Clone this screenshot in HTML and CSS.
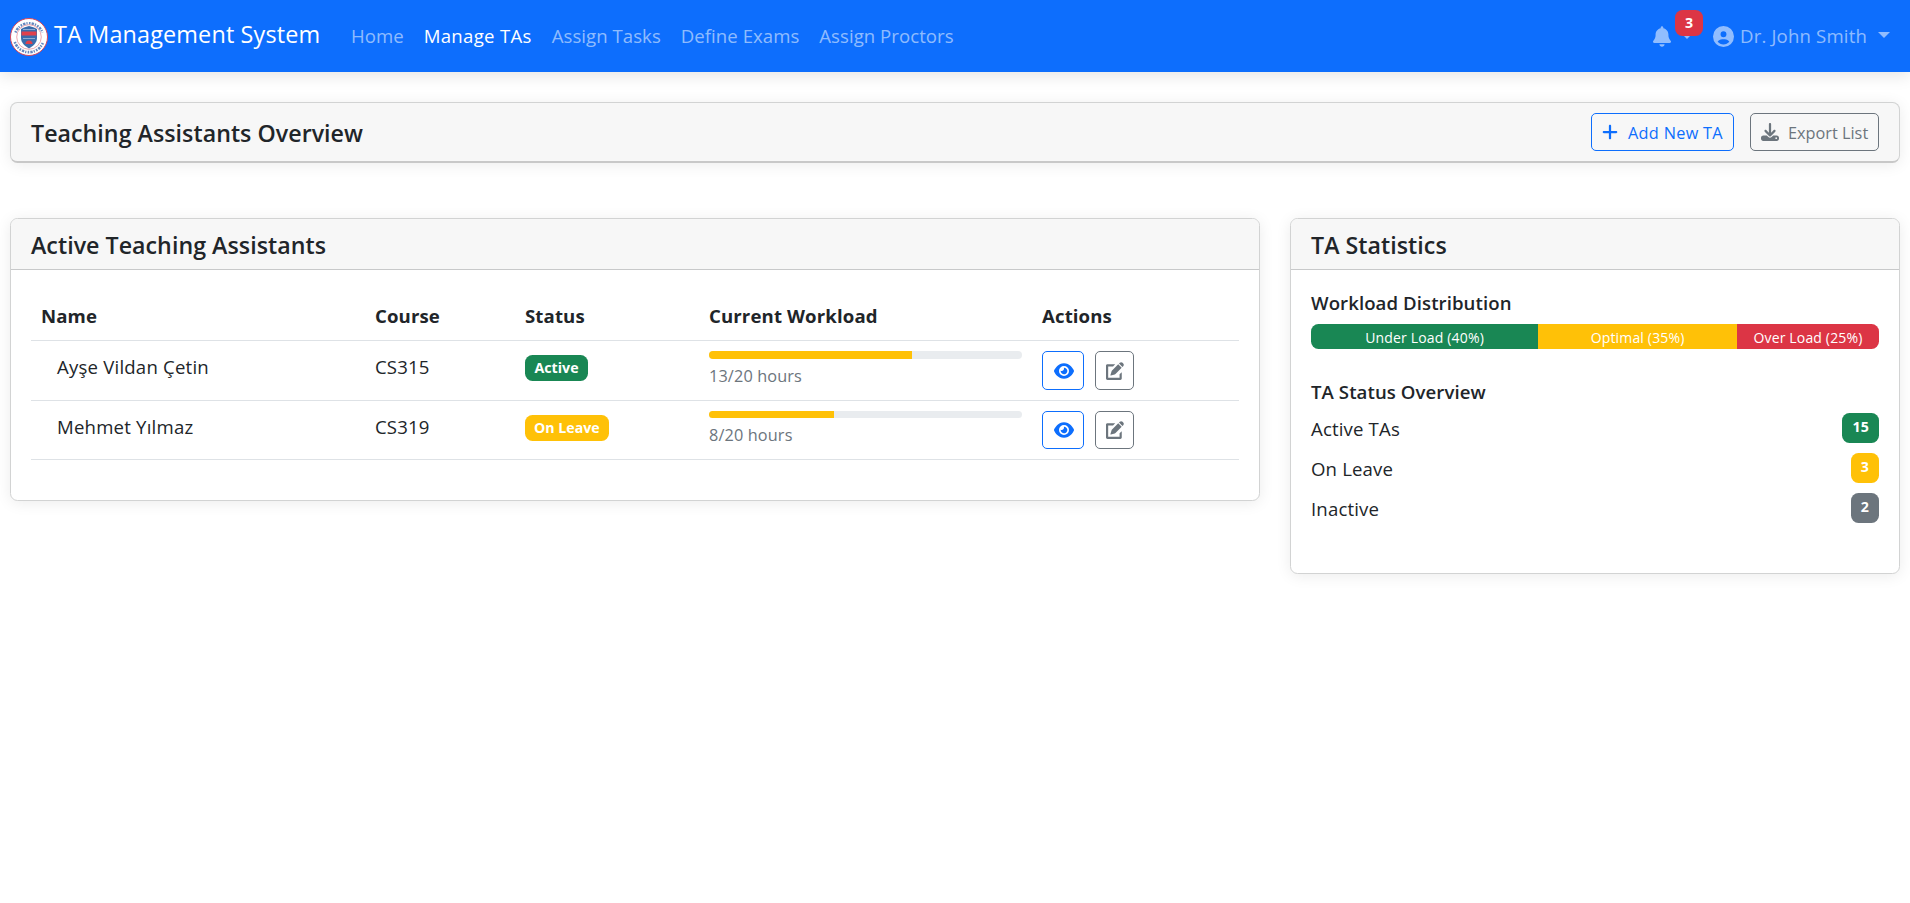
FILE: index.html
```html
<!DOCTYPE html>
<html lang="en">
<head>
<meta charset="utf-8">
<title>TA Management System</title>
<link rel="stylesheet" href="styles.css">
</head>
<body>
<svg class="sprite" aria-hidden="true">
  <symbol id="bell" viewBox="0 0 448 512"><path d="M224 0c-17.7 0-32 14.3-32 32V51.2C119 66 64 130.6 64 208v18.8c0 47-17.3 92.4-48.5 127.6l-7.4 8.3c-8.4 9.4-10.4 22.9-5.3 34.4S19.4 416 32 416H416c12.6 0 24-7.4 29.2-18.9s3.1-25-5.3-34.4l-7.4-8.3C401.3 319.2 384 273.9 384 226.8V208c0-77.4-55-142-128-156.8V32c0-17.7-14.3-32-32-32zm45.3 493.3c12-12 18.7-28.3 18.7-45.3H224 160c0 17 6.7 33.3 18.7 45.3s28.3 18.7 45.3 18.7s33.3-6.7 45.3-18.7z"/></symbol>
  <symbol id="user" viewBox="0 0 512 512"><path d="M399 384.2C376.9 345.8 335.4 320 288 320H224c-47.4 0-88.9 25.8-111 64.2c35.2 39.2 86.2 63.8 143 63.8s107.8-24.7 143-63.8zM0 256a256 256 0 1 1 512 0A256 256 0 1 1 0 256zm256 16a72 72 0 1 0 0-144 72 72 0 1 0 0 144z"/></symbol>
  <symbol id="plus" viewBox="0 0 448 512"><path d="M256 80c0-17.7-14.3-32-32-32s-32 14.3-32 32V224H48c-17.7 0-32 14.3-32 32s14.3 32 32 32H192V432c0 17.7 14.3 32 32 32s32-14.3 32-32V288H400c17.7 0 32-14.3 32-32s-14.3-32-32-32H256V80z"/></symbol>
  <symbol id="download" viewBox="0 0 512 512"><path d="M288 32c0-17.7-14.3-32-32-32s-32 14.3-32 32V274.7l-73.4-73.4c-12.5-12.5-32.8-12.5-45.3 0s-12.5 32.8 0 45.3l128 128c12.5 12.5 32.8 12.5 45.3 0l128-128c12.5-12.5 12.5-32.8 0-45.3s-32.8-12.5-45.3 0L288 274.7V32zM64 352c-35.3 0-64 28.7-64 64v32c0 35.3 28.7 64 64 64H448c35.3 0 64-28.7 64-64V416c0-35.3-28.7-64-64-64H346.5l-45.3 45.3c-25 25-65.5 25-90.5 0L165.5 352H64zm368 56a24 24 0 1 1 0 48 24 24 0 1 1 0-48z"/></symbol>
  <symbol id="eye" viewBox="0 0 576 512"><path d="M288 32c-80.8 0-145.5 36.8-192.6 80.6C48.6 156 17.3 208 2.5 243.7c-3.3 7.9-3.3 16.7 0 24.6C17.3 304 48.6 356 95.4 399.4C142.5 443.2 207.2 480 288 480s145.5-36.8 192.6-80.6c46.8-43.5 78.1-95.4 93-131.1c3.3-7.9 3.3-16.7 0-24.6c-14.9-35.7-46.2-87.7-93-131.1C433.5 68.8 368.8 32 288 32zM144 256a144 144 0 1 1 288 0 144 144 0 1 1 -288 0zm144-64c0 35.3-28.7 64-64 64c-7.1 0-13.9-1.2-20.3-3.3c-5.5-1.8-11.9 1.6-11.7 7.4c.3 6.9 1.3 13.8 3.2 20.7c13.7 51.2 66.4 81.6 117.6 67.9s81.6-66.4 67.9-117.6c-11.1-41.5-47.8-69.4-88.6-71.1c-5.8-.2-9.2 6.1-7.4 11.7c2.1 6.4 3.3 13.2 3.3 20.3z"/></symbol>
  <symbol id="edit" viewBox="0 0 512 512"><path d="M471.600 21.700c-21.900-21.900-57.300-21.900-79.200 0L370 44l98 98 22.300-22.500c21.900-21.900 21.900-57.300 0-79.200zM172.400 241.700c-6.100 6.100-10.800 13.600-13.500 21.900L126 372c-2 8 6 16 14 14l108.400-33c8.200-2.700 15.700-7.400 21.900-13.500L446 164l-98-98zM40 64C18 64 0 82 0 104V472c0 22 18 40 40 40H408c22 0 40-18 40-40V288l-62 62V450H62V126H200l62-62z"/></symbol>
</svg>
<nav class="navbar">
  <svg class="logo" viewBox="0 0 38 38">
    <circle cx="19" cy="19" r="18.5" fill="#fff" stroke="#d9485a" stroke-width="1"/>
    <path d="M5.500 14.500A14.500 14.500 0 0 1 32.500 14.500" fill="none" stroke="#2f5fa8" stroke-width="2.600" stroke-dasharray="1.600 1.100 2.400 1 1.200 1.300" opacity=".75"/>
    <path d="M4.800 24A15 15 0 0 0 33.200 24" fill="none" stroke="#2f5fa8" stroke-width="2.600" stroke-dasharray="1.600 1.100 2.400 1 1.200 1.300" opacity=".75"/>
    <circle cx="19" cy="19" r="12.3" fill="#fff" stroke="#e8909a" stroke-width=".8"/>
    <path d="M11 11l3-1.500L19 8l5 1.500L27 11v9c0 5-4 8-8 10.500C15 28 11 25 11 20z" fill="#3b6cab"/>
    <rect x="11.500" y="13.500" width="15" height="4" fill="#e0404c"/>
    <path d="M13 20.500h12M13 11.500h12" stroke="#8fabd2" stroke-width="1"/>
    <path d="M15.500 26a3.500 3.500 0 0 1 7 0z" fill="#e0404c"/>
  </svg>
  <a class="brand">TA Management System</a>
  <div class="links">
    <a class="link">Home</a><a class="link active">Manage TAs</a><a class="link">Assign Tasks</a><a class="link">Define Exams</a><a class="link">Assign Proctors</a>
  </div>
  <div class="bell"><svg class="bell-icon"><use href="#bell"/></svg><i class="caret"></i><span class="badge count">3</span></div>
  <div class="user"><svg class="user-icon"><use href="#user"/></svg><span class="user-name">Dr. John Smith</span><i class="caret"></i></div>
</nav>
<main class="page">
  <section class="card overview">
    <h5 class="title">Teaching Assistants Overview</h5>
    <div class="tools">
      <button class="btn primary add"><svg class="plus-icon"><use href="#plus"/></svg><span>Add New TA</span></button>
      <button class="btn secondary export"><svg class="dl-icon"><use href="#download"/></svg><span>Export List</span></button>
    </div>
  </section>
  <div class="columns">
    <section class="card list">
      <div class="card-header"><h5 class="title">Active Teaching Assistants</h5></div>
      <table class="table">
        <colgroup><col class="c1"><col class="c2"><col class="c3"><col class="c4"><col class="c5"></colgroup>
        <thead><tr><th>Name</th><th>Course</th><th>Status</th><th>Current Workload</th><th>Actions</th></tr></thead>
        <tbody>
          <tr class="row-a"><td class="name">Ayşe Vildan Çetin</td><td class="course">CS315</td><td class="status"><span class="badge green">Active</span></td>
            <td class="load"><div class="meter"><div class="fill" style="width:65%"></div></div><small>13/20 hours</small></td>
            <td class="actions"><div class="pair"><button class="btn primary view"><svg class="eye-icon"><use href="#eye"/></svg></button><button class="btn secondary edit"><svg class="edit-icon"><use href="#edit"/></svg></button></div></td></tr>
          <tr class="row-b"><td class="name">Mehmet Yılmaz</td><td class="course">CS319</td><td class="status"><span class="badge yellow">On Leave</span></td>
            <td class="load"><div class="meter"><div class="fill" style="width:40%"></div></div><small>8/20 hours</small></td>
            <td class="actions"><div class="pair"><button class="btn primary view"><svg class="eye-icon"><use href="#eye"/></svg></button><button class="btn secondary edit"><svg class="edit-icon"><use href="#edit"/></svg></button></div></td></tr>
        </tbody>
      </table>
    </section>
    <section class="card stats">
      <div class="card-header"><h5 class="title">TA Statistics</h5></div>
      <div class="stats-body">
        <h6 class="sub">Workload Distribution</h6>
        <div class="dist"><div class="seg green" style="width:40%">Under Load (40%)</div><div class="seg yellow" style="width:35%">Optimal (35%)</div><div class="seg red" style="width:25%">Over Load (25%)</div></div>
        <h6 class="sub">TA Status Overview</h6>
        <div class="stat"><span>Active TAs</span><b class="badge tall green">15</b></div>
        <div class="stat"><span>On Leave</span><b class="badge tall yellow">3</b></div>
        <div class="stat"><span>Inactive</span><b class="badge tall gray">2</b></div>
      </div>
    </section>
  </div>
</main>
</body>
</html>
```
FILE: styles.css
```css
* { box-sizing: border-box; }
body { margin: 0; background: #fff; color: #212529; font-family: "Open Sans", "Noto Sans", sans-serif; font-size: 18.6px; line-height: 30px; }
h5, h6 { margin: 0; }
svg { display: block; flex: none; fill: currentColor; }
.sprite { position: absolute; width: 0; height: 0; }

/* Navigation bar */
.navbar { display: flex; align-items: center; height: 72px; padding: 0 20px 0 10px; background: #0d6efd; color: rgba(255,255,255,.55); box-shadow: 0 4px 15px rgba(0,0,0,.1); }
.logo { width: 38px; height: 38px; margin-top: 2px; }
.brand { margin: 0 22px 4px 6px; width: 265px; font-size: 23.4px; letter-spacing: .15px; color: #fff; white-space: nowrap; }
.links { display: flex; }
.link { padding: 0 10px; letter-spacing: .04px; white-space: nowrap; }
.link.active { color: #fff; letter-spacing: .3px; }
.bell { position: relative; display: flex; align-items: center; margin-left: auto; width: 60px; gap: 10px; }
.bell-icon { width: 18px; height: 21px; }
.caret { width: 0; height: 0; border: 6px solid transparent; border-top-color: currentColor; border-bottom: 0; }
.user .caret { margin-bottom: 2px; }
.badge { display: inline-block; height: 26px; padding: 0 9.5px; border-radius: 7.5px; font-size: 14.2px; font-weight: 700; line-height: 26px; color: #fff; white-space: nowrap; }
.count { position: absolute; left: 22px; top: -16px; width: 28px; padding: 0; text-align: center; background: #dc3545; }
.user { display: flex; align-items: center; }
.user-icon { width: 21px; height: 21px; margin-right: 6px; }
.user-name { width: 128px; margin-right: 10px; letter-spacing: .16px; white-space: nowrap; }

/* Cards */
.page { padding: 30px 10px; }
.card { border: 1px solid #d2d3d3; border-radius: 7.5px; background: #fff; box-shadow: 0 2px 15px rgba(0,0,0,.08); }
.overview { display: flex; justify-content: space-between; align-items: center; height: 61px; padding: 0 20px; background: #f7f7f7; border-bottom: 2px solid #c8c8c8; }
.title { padding-top: 1px; font-size: 23.2px; font-weight: 600; letter-spacing: .04px; white-space: nowrap; }
.card-header { height: 51px; padding: 10px 20px; background: #f7f7f7; border-bottom: 1px solid #c8c9ca; border-radius: 7px 7px 0 0; }
.columns { display: flex; align-items: flex-start; gap: 30px; margin-top: 55px; }
.list { width: 1250px; height: 283px; }
.stats { width: 610px; height: 356px; }

/* Buttons */
.tools { display: flex; gap: 16px; }
.btn { display: flex; align-items: center; height: 38px; border: 1px solid; border-radius: 5px; background: transparent; font: 16.3px "Open Sans", sans-serif; white-space: nowrap; }
.btn span { padding-top: 1px; }
.primary { color: #0d6efd; }
.secondary { color: #6c757d; }
.add { width: 143px; padding: 0 10px; letter-spacing: .3px; }
.plus-icon { width: 16px; height: 18px; margin-right: 10px; }
.export { width: 129px; padding: 0 10px; }
.dl-icon { width: 18px; height: 18px; margin-right: 9px; }
.pair { display: flex; gap: 11px; }
.view { width: 42px; height: 39px; padding: 0 9px 0 11px; }
.edit { width: 39px; height: 39px; padding: 0 10px; }
.eye-icon { width: 20px; height: 18px; }
.edit-icon { width: 18px; height: 18px; }

/* Assistants table */
.table { width: 1208px; margin: 21px 0 0 20px; border-collapse: separate; border-spacing: 0; table-layout: fixed; }
.c1 { width: 334px; }
.c2 { width: 150px; }
.c3 { width: 184px; }
.c4 { width: 333px; }
th, td { padding: 10px; text-align: left; vertical-align: top; border-bottom: 1px solid #dee2e6; white-space: nowrap; letter-spacing: .12px; }
thead th { height: 50px; font-weight: 700; line-height: 29px; }
.row-a td { height: 60px; }
.row-b td { height: 59px; }
td.name { padding: 11px 0 0 26px; letter-spacing: .2px; }
td.course { padding-top: 11px; }
td.status { letter-spacing: 0; }
.row-b .badge { padding: 0 9px; }
.row-b .btn { height: 38px; }
.meter { height: 8px; border-radius: 4px; background: #e9ecef; overflow: hidden; }
.row-b .meter { height: 7px; }
.fill { height: 100%; background: #ffc107; }
small { display: block; padding-top: 4px; font-size: 16.3px; color: #6c757d; line-height: 26px; }

/* Statistics */
.green { background: #198754; }
.yellow { background: #ffc107; }
.red { background: #dc3545; }
.gray { background: #6c757d; }
.stats-body { padding: 20px; }
.sub { padding-top: 1px; font-size: 18.6px; font-weight: 600; line-height: 24px; letter-spacing: .08px; }
.dist { display: flex; height: 25px; margin: 9px 0 30px; border-radius: 7.5px; overflow: hidden; }
.seg { display: flex; justify-content: center; font-size: 14px; line-height: 27px; letter-spacing: .16px; color: #fff; white-space: nowrap; }
.stat { display: flex; justify-content: space-between; height: 30px; margin-top: 10px; line-height: 31px; letter-spacing: .15px; }
.sub + .stat { margin-top: 9px; }
.tall { height: 30px; padding: 0 10px; line-height: 28px; }
```
